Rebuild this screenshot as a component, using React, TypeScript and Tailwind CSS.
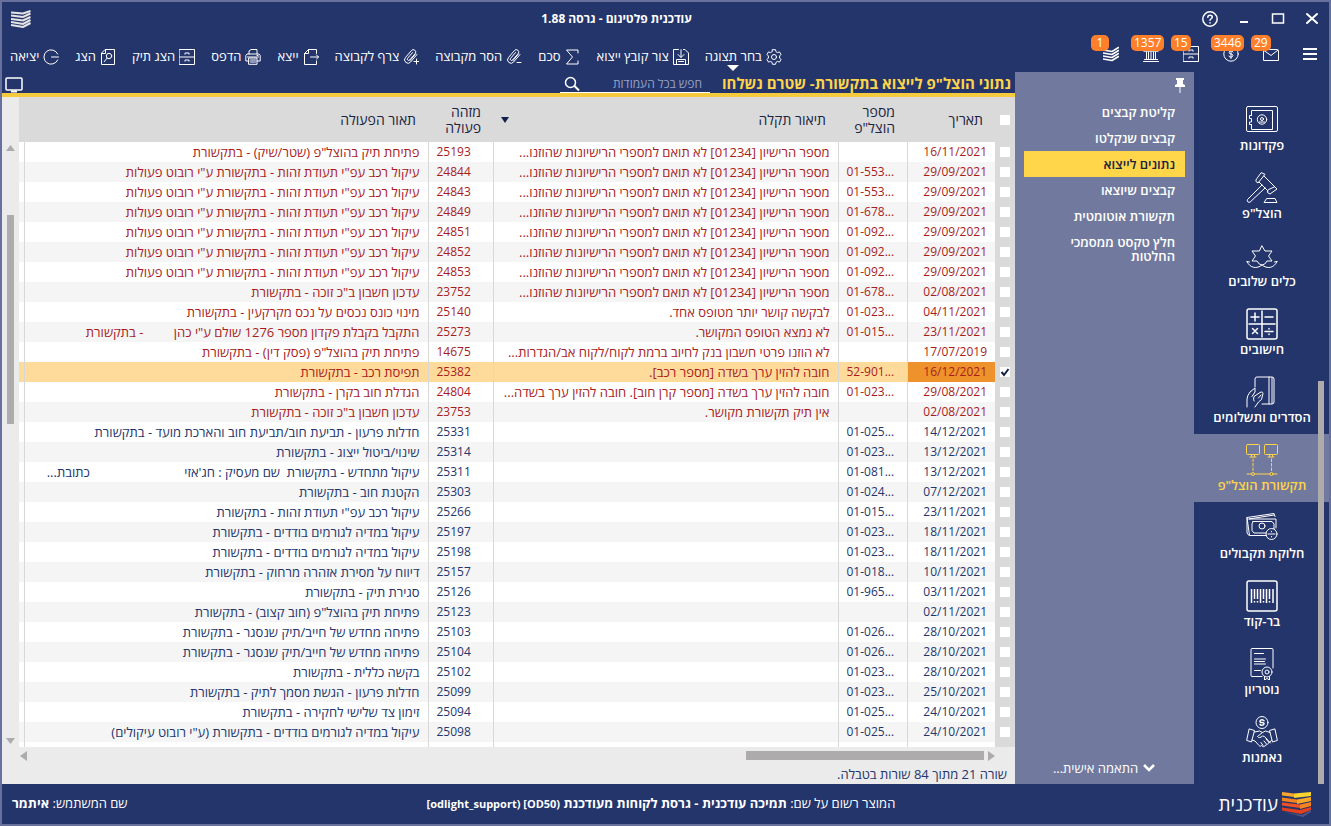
import { useState } from "react";
import type { ReactNode } from "react";

type Row = {
  date: string;
  file: string;
  error: string;
  id: string;
  action: string;
};

const BAD_LICENSE = "מספר הרישיון [01234] לא תואם למספרי הרישיונות שהוזנו...";
const SEIZE_BOT = 'עיקול רכב עפ"י תעודת זהות - בתקשורת ע"י רובוט פעולות';

const rows: Row[] = [
  { date: "16/11/2021", file: "", error: BAD_LICENSE, id: "25193", action: 'פתיחת תיק בהוצל"פ (שטר/שיק) - בתקשורת' },
  { date: "29/09/2021", file: "01-553...", error: BAD_LICENSE, id: "24844", action: SEIZE_BOT },
  { date: "29/09/2021", file: "01-553...", error: BAD_LICENSE, id: "24843", action: SEIZE_BOT },
  { date: "29/09/2021", file: "01-678...", error: BAD_LICENSE, id: "24849", action: SEIZE_BOT },
  { date: "29/09/2021", file: "01-092...", error: BAD_LICENSE, id: "24851", action: SEIZE_BOT },
  { date: "29/09/2021", file: "01-092...", error: BAD_LICENSE, id: "24852", action: SEIZE_BOT },
  { date: "29/09/2021", file: "01-092...", error: BAD_LICENSE, id: "24853", action: SEIZE_BOT },
  { date: "02/08/2021", file: "01-678...", error: BAD_LICENSE, id: "23752", action: 'עדכון חשבון ב"כ זוכה - בתקשורת' },
  { date: "04/11/2021", file: "01-023...", error: "לבקשה קושר יותר מטופס אחד.", id: "25140", action: "מינוי כונס נכסים על נכס מקרקעין - בתקשורת" },
  { date: "23/11/2021", file: "01-015...", error: "לא נמצא הטופס המקושר.", id: "25273", action: 'התקבל בקבלת פקדון מספר 1276 שולם ע"י כהן         - בתקשורת' },
  { date: "17/07/2019", file: "", error: "לא הוזנו פרטי חשבון בנק לחיוב ברמת לקוח/לקוח אב/הגדרות...", id: "14675", action: 'פתיחת תיק בהוצל"פ (פסק דין) - בתקשורת' },
  { date: "16/12/2021", file: "52-901...", error: "חובה להזין ערך בשדה [מספר רכב].", id: "25382", action: "תפיסת רכב - בתקשורת" },
  { date: "29/08/2021", file: "01-023...", error: "חובה להזין ערך בשדה [מספר קרן חוב]. חובה להזין ערך בשדה...", id: "24804", action: "הגדלת חוב בקרן - בתקשורת" },
  { date: "02/08/2021", file: "", error: "אין תיק תקשורת מקושר.", id: "23753", action: 'עדכון חשבון ב"כ זוכה - בתקשורת' },
  { date: "14/12/2021", file: "01-025...", error: "", id: "25331", action: "חדלות פרעון - תביעת חוב/תביעת חוב והארכת מועד - בתקשורת" },
  { date: "13/12/2021", file: "01-023...", error: "", id: "25314", action: "שינוי/ביטול ייצוג - בתקשורת" },
  { date: "13/12/2021", file: "01-081...", error: "", id: "25311", action: "עיקול מתחדש - בתקשורת  שם מעסיק : חג'אזי                            כתובת..." },
  { date: "07/12/2021", file: "01-024...", error: "", id: "25303", action: "הקטנת חוב - בתקשורת" },
  { date: "23/11/2021", file: "01-015...", error: "", id: "25266", action: 'עיקול רכב עפ"י תעודת זהות - בתקשורת' },
  { date: "18/11/2021", file: "01-023...", error: "", id: "25197", action: "עיקול במדיה לגורמים בודדים - בתקשורת" },
  { date: "18/11/2021", file: "01-023...", error: "", id: "25198", action: "עיקול במדיה לגורמים בודדים - בתקשורת" },
  { date: "10/11/2021", file: "01-018...", error: "", id: "25157", action: "דיווח על מסירת אזהרה מרחוק - בתקשורת" },
  { date: "03/11/2021", file: "01-965...", error: "", id: "25126", action: "סגירת תיק - בתקשורת" },
  { date: "02/11/2021", file: "", error: "", id: "25123", action: 'פתיחת תיק בהוצל"פ (חוב קצוב) - בתקשורת' },
  { date: "28/10/2021", file: "01-026...", error: "", id: "25103", action: "פתיחה מחדש של חייב/תיק שנסגר - בתקשורת" },
  { date: "28/10/2021", file: "01-026...", error: "", id: "25104", action: "פתיחה מחדש של חייב/תיק שנסגר - בתקשורת" },
  { date: "28/10/2021", file: "01-023...", error: "", id: "25102", action: "בקשה כללית - בתקשורת" },
  { date: "25/10/2021", file: "01-023...", error: "", id: "25099", action: "חדלות פרעון - הגשת מסמך לתיק - בתקשורת" },
  { date: "24/10/2021", file: "01-025...", error: "", id: "25094", action: "זימון צד שלישי לחקירה - בתקשורת" },
  { date: "24/10/2021", file: "01-025...", error: "", id: "25098", action: 'עיקול במדיה לגורמים בודדים - בתקשורת (ע"י רובוט עיקולים)' },
];

function Glyph({ size = 16, children }: { size?: number; children: ReactNode }) {
  return (
    <svg
      width={size}
      height={size}
      viewBox={`0 0 ${size} ${size}`}
      fill="none"
      stroke="currentColor"
      strokeLinecap="round"
      strokeLinejoin="round"
      className="block shrink-0"
      aria-hidden="true"
    >
      {children}
    </svg>
  );
}

const clip = <path d="M14 5.500 7.600 13a3.400 3.400 0 0 1-5.200-4.400l6-7a2.400 2.400 0 0 1 3.800 3L6.600 11a1.300 1.300 0 0 1-2-1.700l5-5.800M12.600 4.800 7 11.600" />;
const cabinet = <path d="M.5.500h15v15H.5zM.5 8h15M6 5.200V4h4v1.200M6 12.200V11h4v1.200" />;

const tools: { label: string; icon: ReactNode; menu?: boolean }[] = [
  {
    label: "בחר תצוגה",
    menu: true,
    icon: (
      <>
        <path d="M6.500.7h3l.5 2 1.500.9 2-.7L15 5.500 13.600 7v2l1.400 1.500-1.500 2.600-2-.7-1.500.9-.5 2h-3l-.5-2-1.500-.9-2 .7L1 10.500 2.400 9V7L1 5.500l1.500-2.600 2 .7L6 2.700z" />
        <circle cx="8" cy="8" r="2.500" />
      </>
    ),
  },
  {
    label: "צור קובץ ייצוא",
    icon: <path d="M5.500.5H.5v15h15V4L12 .5h-1.500M8 .7v7.500M5 5.500l3 3 3-3M3.500 15v-4.500h9V15M5.500 12.500h5" />,
  },
  { label: "סכם", icon: <path d="M14 4V1H2.500l6 7-6 7H14v-3" /> },
  { label: "הסר מקבוצה", icon: <>{clip}<path d="M11 13.500h4" /></> },
  { label: "צרף לקבוצה", icon: <>{clip}<path d="M11 12.500h5M13.500 10v5" /></> },
  {
    label: "ייצא",
    icon: <path d="M13.500 4.500v-4h-8l-4 4v11h12V12M5.500.5v4h-4M7.500 8h8M13.500 6l2 2-2 2" />,
  },
  {
    label: "הדפס",
    icon: (
      <path d="M4 5V2l2-1.500h6V5M4 12H.8V6.500L2 5h12l1.200 1.500V12H12M2.500 8h11M4 9h8v6.300H4zM5.500 11h5M5.500 13h5M12 6.500h1" />
    ),
  },
  { label: "הצג תיק", icon: cabinet },
  {
    label: "הצג",
    icon: (
      <>
        <path d="M5.500.5h9v15h-13v-11zM5.500.5v4h-4" />
        <circle cx="9" cy="7" r="2.700" />
        <path d="m7 9.200-2.800 3.500" />
      </>
    ),
  },
  { label: "יציאה", icon: <path d="M14.700 5A7.200 7.200 0 1 0 14.700 11M8.500 8h7" /> },
];

const alerts: { name: string; count: string; icon: ReactNode }[] = [
  { name: "דואר", count: "29", icon: <path d="M2 3.500h12l1.500 1v10H.5v-10zM1 4.500l7 5 7-5.500" /> },
  {
    name: "תשלומים",
    count: "3446",
    icon: (
      <>
        <circle cx="8" cy="8" r="7.200" />
        <path d="M10 6q-.5-1.200-2-1.200T6.200 6.300 8 8t1.900 1.600T8 11.200 6 10M8 3.500v9" />
      </>
    ),
  },
  { name: "תיקים", count: "15", icon: cabinet },
  { name: "בנקים", count: "1357", icon: <path d="m1 5 7-4.200L15 5zM3.500 6v7M5.500 6v7M8 6v7M10.500 6v7M12.500 6v7M1.500 13.500h13M.5 15.500h15" /> },
  {
    name: "מסמכים",
    count: "1",
    icon: <path strokeWidth="1.500" d="m0 4 9 1.500 6.500-4M0 7l9 1.500 6.500-4M0 10l9 1.500 6.500-4M0 13l9 1.500 6.500-4" />,
  },
];

const modules: { label: string; icon: ReactNode }[] = [
  {
    label: "פקדונות",
    icon: (
      <>
        <rect x=".5" y="2.500" width="31" height="25" rx="1.500" />
        <path d="M5.500 11.500v-5h21v19h-21v-5M5.500 11.500h-2v3h2v3.500h-2v2.500h2" />
        <circle cx="16" cy="15.500" r="4.700" />
        <circle cx="16" cy="15" r="1.500" />
        <path d="M13.500 18h5" />
      </>
    ),
  },
  {
    label: 'הוצל"פ',
    icon: (
      <>
        <path d="m15.500.8 3.500 1.500L12 11l-2-1.500q-.5-1.500.5-2.500zM29 15l2 2-7 5-2.500-1.500q-.5-1.500.5-2.500zM18 4l11 11M13 10l9 9M16 13 1.500 27.500c-1 2 1 3.500 2.700 2.500L19 16" />
        <path d="M21 26.500h8l2 4H18.500z" />
      </>
    ),
  },
  {
    label: "כלים שלובים",
    icon: (
      <>
        <path d="m16 6 3 5h7l-3.500 5 3.500 5h-5q-2 4-5 4t-5-4H6l3.500-5L6 11h7z" />
        <path d="M1 21.500c3 7 10 7.500 15 3.500 5 4 12 3.500 15-3.500M1 21.500l2.500.5M31 21.500l-2.500.5" />
      </>
    ),
  },
  {
    label: "חישובים",
    icon: (
      <>
        <rect x="1" y="1" width="30" height="30" rx="2" strokeWidth="1.500" />
        <path strokeWidth="1.500" d="M16 3v26M3 16h26M5 9h8M9 5v8M19 9h8M6.500 20.500l5 5M11.500 20.500l-5 5M19 23.500h8M23 20.500v.5M23 26v.5" />
      </>
    ),
  },
  {
    label: "הסדרים ותשלומים",
    icon: (
      <path d="M9 11V3q0-2 2-2h15q2 0 2 2v23q0 2-2 2H16M23 1v27M26 1.500v26M1 31v-8q0-3 3-7l5-4v4l-3 4.500M9 31l3.500-5 3-2.500 1.500-6c0-1.500-1.500-2-3-1L8 20.500q-1 3 0 4.500M12.500 22l2.500-3" />
    ),
  },
  {
    label: 'תקשורת הוצל"פ',
    icon: (
      <>
        <rect x=".5" y=".5" width="13" height="10" rx="1" />
        <rect x="18.500" y=".5" width="13" height="10" rx="1" />
        <path d="M4 13h6M5.500 10.500v2M8.500 10.500v2M22 13h6M23.500 10.500v2M26.500 10.500v2M1 30h4.500M8.500 30H24M27 30h4" />
        <path d="M7 15v13M25.500 15v13" strokeDasharray="2.500 2" />
        <circle cx="7" cy="30" r="1.500" />
        <circle cx="25.500" cy="30" r="1.500" />
      </>
    ),
  },
  {
    label: "חלוקת תקבולים",
    icon: (
      <>
        <path d="M20.500 23.500H3.500L1 5.500l27-4 1 3M1 5.500V21l2 2.500M3 7h27v9M3 7 28 3M7 9.500h19l2 2.500v5M20 21H8l-2-2.500V12l1-2.500" />
        <circle cx="16" cy="14" r="3" />
        <circle cx="25.500" cy="22" r="5.500" />
        <path d="M22 22h7M25.500 19.300v.5M25.500 24.500v.5" />
      </>
    ),
  },
  {
    label: "בר-קוד",
    icon: (
      <>
        <rect x="1" y="1" width="30" height="30" rx="2" strokeWidth="1.500" />
        <path strokeLinecap="butt" strokeWidth="1.500" d="M5.500 9v14M8.500 9v10M11.500 9v10M14.500 9v14M17.500 9v10M20.500 9v14M23.500 9v10M27 9v14M8.500 21v1.500M11.500 21v1.500M17.500 21v1.500M23.500 21v1.500" />
      </>
    ),
  },
  {
    label: "נוטריון",
    icon: (
      <>
        <path d="M16 28.500H6q-1 0-1-1V1.500q0-1 1-1h20q1 0 1 1V20M8.500 5.500h9M8.500 11h11M8.500 13.500h10M8.500 16h11M8.500 22.500h6" />
        <circle cx="21" cy="24" r="5" />
        <circle cx="21" cy="24" r="2" />
        <path d="M18.500 28.500V32l2.500-1.500 2.500 1.500v-3.500" />
      </>
    ),
  },
  {
    label: "נאמנות",
    icon: (
      <>
        <circle cx="16" cy="6.500" r="6" />
        <path strokeWidth="1.500" d="M18 4.800Q17.500 3.700 16 3.700t-2 1.300 2 1.500 2 1.500-2 1.300-2-1" />
        <path d="m3.500 13 5 1.500L5.500 26 1 24.500zM28.500 13l-5 1.500 3 11.500 4.500-1.500zM8.500 16l5-1 3 1.500 3-1.500 4.500 1.500M6 24l3 1 4 4.500c1 1 2 1 2.500 0l1.500 1c1 .5 2 0 2-1l1.500-.5 1.500-1.500 3.500-3M16.500 16.500l-5 4c1 1.500 3 1.500 5-.5l2 .5 6 6.500M18 25l2.500 3M15 26.500l2 3M20 23l3 3.500" />
      </>
    ),
  },
];

const views = ["קליטת קבצים", "קבצים שנקלטו", "נתונים לייצוא", "קבצים שיוצאו", "תקשורת אוטומטית", "חלץ טקסט ממסמכי החלטות"];

function TitleBar() {
  return (
    <header className="flex h-[34px] items-center justify-between pr-[9px] pl-[9px] text-white">
      <div className="flex items-center gap-[18px]">
        <button type="button" aria-label="סגירה">
          <Glyph>
            <path strokeWidth="2" d="m3 3 10 9M13 3 3 12" />
          </Glyph>
        </button>
        <button type="button" aria-label="הגדלה">
          <Glyph>
            <path strokeWidth="1.500" strokeLinejoin="miter" d="M2.500 3h11v9h-11z" />
          </Glyph>
        </button>
        <button type="button" aria-label="מזעור">
          <Glyph>
            <path strokeWidth="2" strokeLinecap="butt" d="M4 11h8" />
          </Glyph>
        </button>
        <button type="button" aria-label="עזרה">
          <Glyph>
            <circle cx="8" cy="8" r="7.200" strokeWidth="1.500" />
            <path strokeWidth="1.500" d="M5.800 6.300c0-3 4.500-2.700 4.500-.2 0 1.600-2.300 1.700-2.300 3.200M8 11.700v.2" />
          </Glyph>
        </button>
      </div>
      <h1 className="grow text-center text-xs font-bold">עודכנית פלטינום - גרסה 1.88</h1>
      <svg width="20" height="18" viewBox="0 0 20 18" fill="none" stroke="#e4e4e4" strokeWidth="2" aria-hidden="true">
        <path d="m0 2.500 12 1L19.500 1M0 5.500l12 1.500 7.500-3.500M0 9l12 1.500L19.500 7M0 12l12 2 7.500-4M0 15l12 2 7.500-4" />
      </svg>
    </header>
  );
}

function Toolbar() {
  return (
    <div className="flex h-9 items-center justify-end gap-4 pt-[6px] pl-2 text-[13px] text-white">
      {tools.map((tool) => (
        <button key={tool.label} type="button" className="relative flex items-center gap-1 whitespace-nowrap">
          <Glyph>{tool.icon}</Glyph>
          <span>{tool.label}</span>
          {tool.menu && (
            <svg width="12" height="6" viewBox="0 0 12 6" className="absolute -bottom-1 left-[22px] fill-white" aria-hidden="true">
              <path d="M0 0h12L6 6z" />
            </svg>
          )}
        </button>
      ))}
    </div>
  );
}

function GridTable() {
  const [checked, setChecked] = useState<string[]>(["25382"]);

  const toggle = (id: string) =>
    setChecked((prev) => (prev.includes(id) ? prev.filter((item) => item !== id) : [...prev, id]));

  return (
    <table className="w-full table-fixed border-collapse bg-white text-xs">
      <colgroup>
        <col className="w-5" />
        <col className="w-[88px]" />
        <col className="w-[69px]" />
        <col className="w-[345px]" />
        <col className="w-[65px]" />
        <col />
        <col className="w-[5px]" />
      </colgroup>
      <thead className="bg-[#dadada] text-sm leading-4 text-[#1b2442]">
        <tr className="h-[45px]">
          <th>
            <input type="checkbox" aria-label="בחירת כל השורות" className="mx-auto block size-[10px] appearance-none bg-white" />
          </th>
          <th className="pr-3 text-right font-normal">תאריך</th>
          <th className="pr-3 text-right font-normal">מספר הוצל"פ</th>
          <th className="pr-3 text-right font-normal">
            <div className="flex items-center justify-between pl-2">
              תיאור תקלה
              <svg width="8" height="6" viewBox="0 0 8 6" aria-label="מסונן">
                <path d="M0 0h8L4 6z" fill="#14204a" />
              </svg>
            </div>
          </th>
          <th className="pr-3 text-right font-normal">מזהה פעולה</th>
          <th className="pr-3 text-right font-normal">תאור הפעולה</th>
          <th />
        </tr>
      </thead>
      <tbody>
        {rows.map((row, index) => {
          const selected = row.id === "25382";
          const tone = index < 14 ? "text-[#a81c1c]" : "text-[#24356b]";
          const fill = selected ? "bg-[#ffdb9b]" : index % 2 === 0 ? "bg-white" : "bg-[#f5f5f5]";
          return (
            <tr key={row.id} className={`h-5 whitespace-pre ${tone} ${fill}`}>
              <td className="bg-[#dadada] p-0">
                <div className="mx-auto grid size-[10px] bg-white">
                  <input
                    type="checkbox"
                    aria-label={`בחירת שורה ${row.id}`}
                    checked={checked.includes(row.id)}
                    onChange={() => toggle(row.id)}
                    className="col-start-1 row-start-1 size-[10px] appearance-none"
                  />
                  {checked.includes(row.id) && (
                    <svg
                      width="10"
                      height="10"
                      viewBox="0 0 10 10"
                      fill="none"
                      stroke="#14204a"
                      strokeWidth="2"
                      className="pointer-events-none col-start-1 row-start-1"
                      aria-hidden="true"
                    >
                      <path d="m1.500 5 2.500 3 4.500-6" />
                    </svg>
                  )}
                </div>
              </td>
              <td className={`border-l border-[#d8d8d8] p-0 pr-2 ${selected ? "bg-[#ee932b]" : ""}`}>
                <bdi>{row.date}</bdi>
              </td>
              <td dir="ltr" className="border-l border-[#d8d8d8] p-0 pl-2 text-left">
                {row.file}
              </td>
              <td className="overflow-hidden border-l border-[#d8d8d8] p-0 pr-2 text-[13px] leading-5">{row.error}</td>
              <td dir="ltr" className="border-l border-[#d8d8d8] p-0 pl-2 text-left">
                {row.id}
              </td>
              <td className="overflow-hidden border-l border-[#d8d8d8] p-0 pr-2 text-[13px] leading-5">{row.action}</td>
              <td className="p-0" />
            </tr>
          );
        })}
        <tr className="h-[5px]">
          <td className="bg-[#dadada] p-0" />
          <td className="border-l border-[#d8d8d8] p-0" />
          <td className="border-l border-[#d8d8d8] p-0" />
          <td className="border-l border-[#d8d8d8] p-0" />
          <td className="border-l border-[#d8d8d8] p-0" />
          <td className="border-l border-[#d8d8d8] p-0" />
          <td className="p-0" />
        </tr>
      </tbody>
    </table>
  );
}

function Workspace() {
  return (
    <main className="flex min-w-0 grow flex-col">
      <Toolbar />
      <div className="flex h-[21px] items-end pr-1 pl-[3px] text-white">
        <h2 className="text-[15px] leading-5 font-bold whitespace-nowrap text-[#ffd34a]">
          נתוני הוצל"פ לייצוא בתקשורת- שטרם נשלחו
        </h2>
        <div className="mr-3 flex h-[18px] w-[150px] items-center gap-2 border-b border-white pl-1">
          <input
            type="search"
            aria-label="חיפוש"
            placeholder="חפש בכל העמודות"
            className="min-w-0 grow bg-transparent pr-2 text-xs leading-4 outline-none placeholder:text-[#98a2c4]"
          />
          <svg width="16" height="16" viewBox="0 0 16 16" fill="none" stroke="currentColor" strokeWidth="1.500" className="shrink-0" aria-hidden="true">
            <circle cx="6.500" cy="6.500" r="5" />
            <path strokeWidth="2" d="m10.500 10 4.500 4.500" />
          </svg>
        </div>
        <button type="button" aria-label="תצוגת מסך" className="mr-auto">
          <svg width="18" height="16" viewBox="0 0 18 16" fill="none" stroke="currentColor" strokeWidth="1.500" className="block" aria-hidden="true">
            <rect x="1" y="1" width="16" height="12" rx="1" />
            <path d="M6 14.500h6" strokeWidth="2" />
          </svg>
        </button>
      </div>
      <div className="h-1 bg-[#f5cb3d]" />
      <div className="flex grow bg-[#ebebeb]">
        <div className="flex min-w-0 grow flex-col">
          <GridTable />
          <div className="flex h-[17px] items-center justify-between pr-5 pl-px">
            <div className="flex items-center">
              <svg width="7" height="10" viewBox="0 0 7 10" fill="#adabab" aria-hidden="true">
                <path d="m0 0 7 5-7 5z" />
              </svg>
              <div className="mr-1 h-[9px] w-[238px] bg-[#adabab]" />
            </div>
            <svg width="7" height="10" viewBox="0 0 7 10" fill="#adabab" aria-hidden="true">
              <path d="M7 0 0 5l7 5z" />
            </svg>
          </div>
          <p className="pr-2 text-[13px] leading-5 text-[#24356b]">שורה 21 מתוך 84 שורות בטבלה.</p>
        </div>
        <div className="flex h-[647px] w-[17px] shrink-0 flex-col items-center pt-12">
          <svg width="9" height="6" viewBox="0 0 9 6" fill="#adabab" aria-hidden="true">
            <path d="M0 6h9L4.500 0z" />
          </svg>
          <div className="mt-16 h-[209px] w-[7px] bg-[#adabab]" />
          <svg width="9" height="6" viewBox="0 0 9 6" fill="#adabab" className="mt-auto" aria-hidden="true">
            <path d="M0 0h9L4.500 6z" />
          </svg>
        </div>
      </div>
    </main>
  );
}

function Alerts() {
  return (
    <div className="flex h-9 items-center pr-3 text-white">
      <button type="button" aria-label="תפריט" className="flex w-[14px] flex-col gap-[3px]">
        <span className="h-[2px] bg-white" />
        <span className="h-[2px] bg-white" />
        <span className="h-[2px] bg-white" />
      </button>
      <div className="mr-6 flex gap-6">
        {alerts.map((alert) => (
          <button key={alert.name} type="button" aria-label={alert.name} className="relative">
            <Glyph>{alert.icon}</Glyph>
            <span className="absolute -top-[11px] -left-3 min-w-[18px] rounded-[5px] bg-[#ff7f2a] px-[3px] text-center text-xs leading-4">
              {alert.count}
            </span>
          </button>
        ))}
      </div>
    </div>
  );
}

function ModuleNav() {
  return (
    <nav aria-label="מודולים" className="relative w-[135px] pt-[22px]">
      {modules.map((item, index) => (
        <a
          key={item.label}
          href="#"
          className={`flex h-[68px] flex-col items-center pt-[10px] pl-px ${index === 5 ? "bg-[#717a9e] text-[#ffd34a]" : "text-white"}`}
        >
          <Glyph size={32}>{item.icon}</Glyph>
          <span className="text-[13px] leading-[18px] font-semibold whitespace-nowrap">{item.label}</span>
        </a>
      ))}
      <div className="absolute right-[5px] bottom-0 h-[403px] w-[6px] bg-[#adabab]" />
    </nav>
  );
}

function ViewList() {
  return (
    <aside className="flex w-[179px] flex-col bg-[#717a9e] px-[9px] text-white">
      <button type="button" aria-label="נעיצה" className="mt-[6px] mb-[6px] self-start">
        <svg width="10" height="15" viewBox="0 0 10 15" fill="currentColor" className="block" aria-hidden="true">
          <path d="M1 0h8v2H8v4l2 1v2H0V7l2-1V2H1zM4.500 9h1v6h-1z" />
        </svg>
      </button>
      {views.map((view, index) => (
        <a
          key={view}
          href="#"
          className={`px-[10px] py-[6px] text-[13px] leading-[14px] font-semibold ${index === 2 ? "bg-[#ffd54a] text-[#1b2442]" : ""}`}
        >
          {view}
        </a>
      ))}
      <button type="button" className="mt-auto mb-2 flex items-center gap-1 self-center text-[13px] leading-4">
        <svg width="14" height="10" viewBox="0 0 14 10" fill="none" stroke="currentColor" strokeWidth="2.500" aria-hidden="true">
          <path d="m2 2 5 5 5-5" />
        </svg>
        התאמה אישית...
      </button>
    </aside>
  );
}

function Footer() {
  return (
    <footer className="flex h-10 items-center justify-between pr-[17px] pl-[10px] text-[13px] text-white">
      <div className="flex items-center gap-1">
        <svg width="30" height="26" viewBox="0 0 30 26" aria-hidden="true">
          <path d="m0 1 12 1.500V6L0 4.500z" fill="#f7a52c" />
          <path d="m12 2.500 17-1.500v4L12 7z" fill="#fbd42f" />
          <path d="m0 6.500 15 2V12L0 10z" fill="#f58220" />
          <path d="M15 8.500 29 6v4l-14 3z" fill="#f9a825" />
          <path d="m0 11.500 18 2V17L0 14.500z" fill="#ef4f23" />
          <path d="m18 13.500 11-2.500v4l-11 3z" fill="#f58220" />
          <path d="m0 16.500 18 2.500 11-3v3l-10 4L0 19.500z" fill="#e2401f" />
          <path d="m2 21 18 3 9-5v2l-8 5z" fill="#4d5580" />
        </svg>
        <span className="text-[19px] leading-6 font-medium">עודכנית</span>
      </div>
      <p className="mr-6">
        המוצר רשום על שם:{" "}
        <b>
          תמיכה עודכנית - גרסת לקוחות מעודכנת{" "}
          <bdi dir="ltr" className="text-[11px]">
            [odlight_support) [OD50)
          </bdi>
        </b>
      </p>
      <p>
        שם המשתמש: <b>איתמר</b>
      </p>
    </footer>
  );
}

export default function App() {
  return (
    <div
      dir="rtl"
      className="flex min-h-screen flex-col border-2 border-[#67719c] bg-[#24356b] font-['Open_Sans','Noto_Sans',sans-serif]"
    >
      <TitleBar />
      <div className="flex grow">
        <div className="flex w-[314px] shrink-0 flex-col">
          <Alerts />
          <div className="flex grow">
            <ModuleNav />
            <ViewList />
          </div>
        </div>
        <Workspace />
      </div>
      <Footer />
    </div>
  );
}
